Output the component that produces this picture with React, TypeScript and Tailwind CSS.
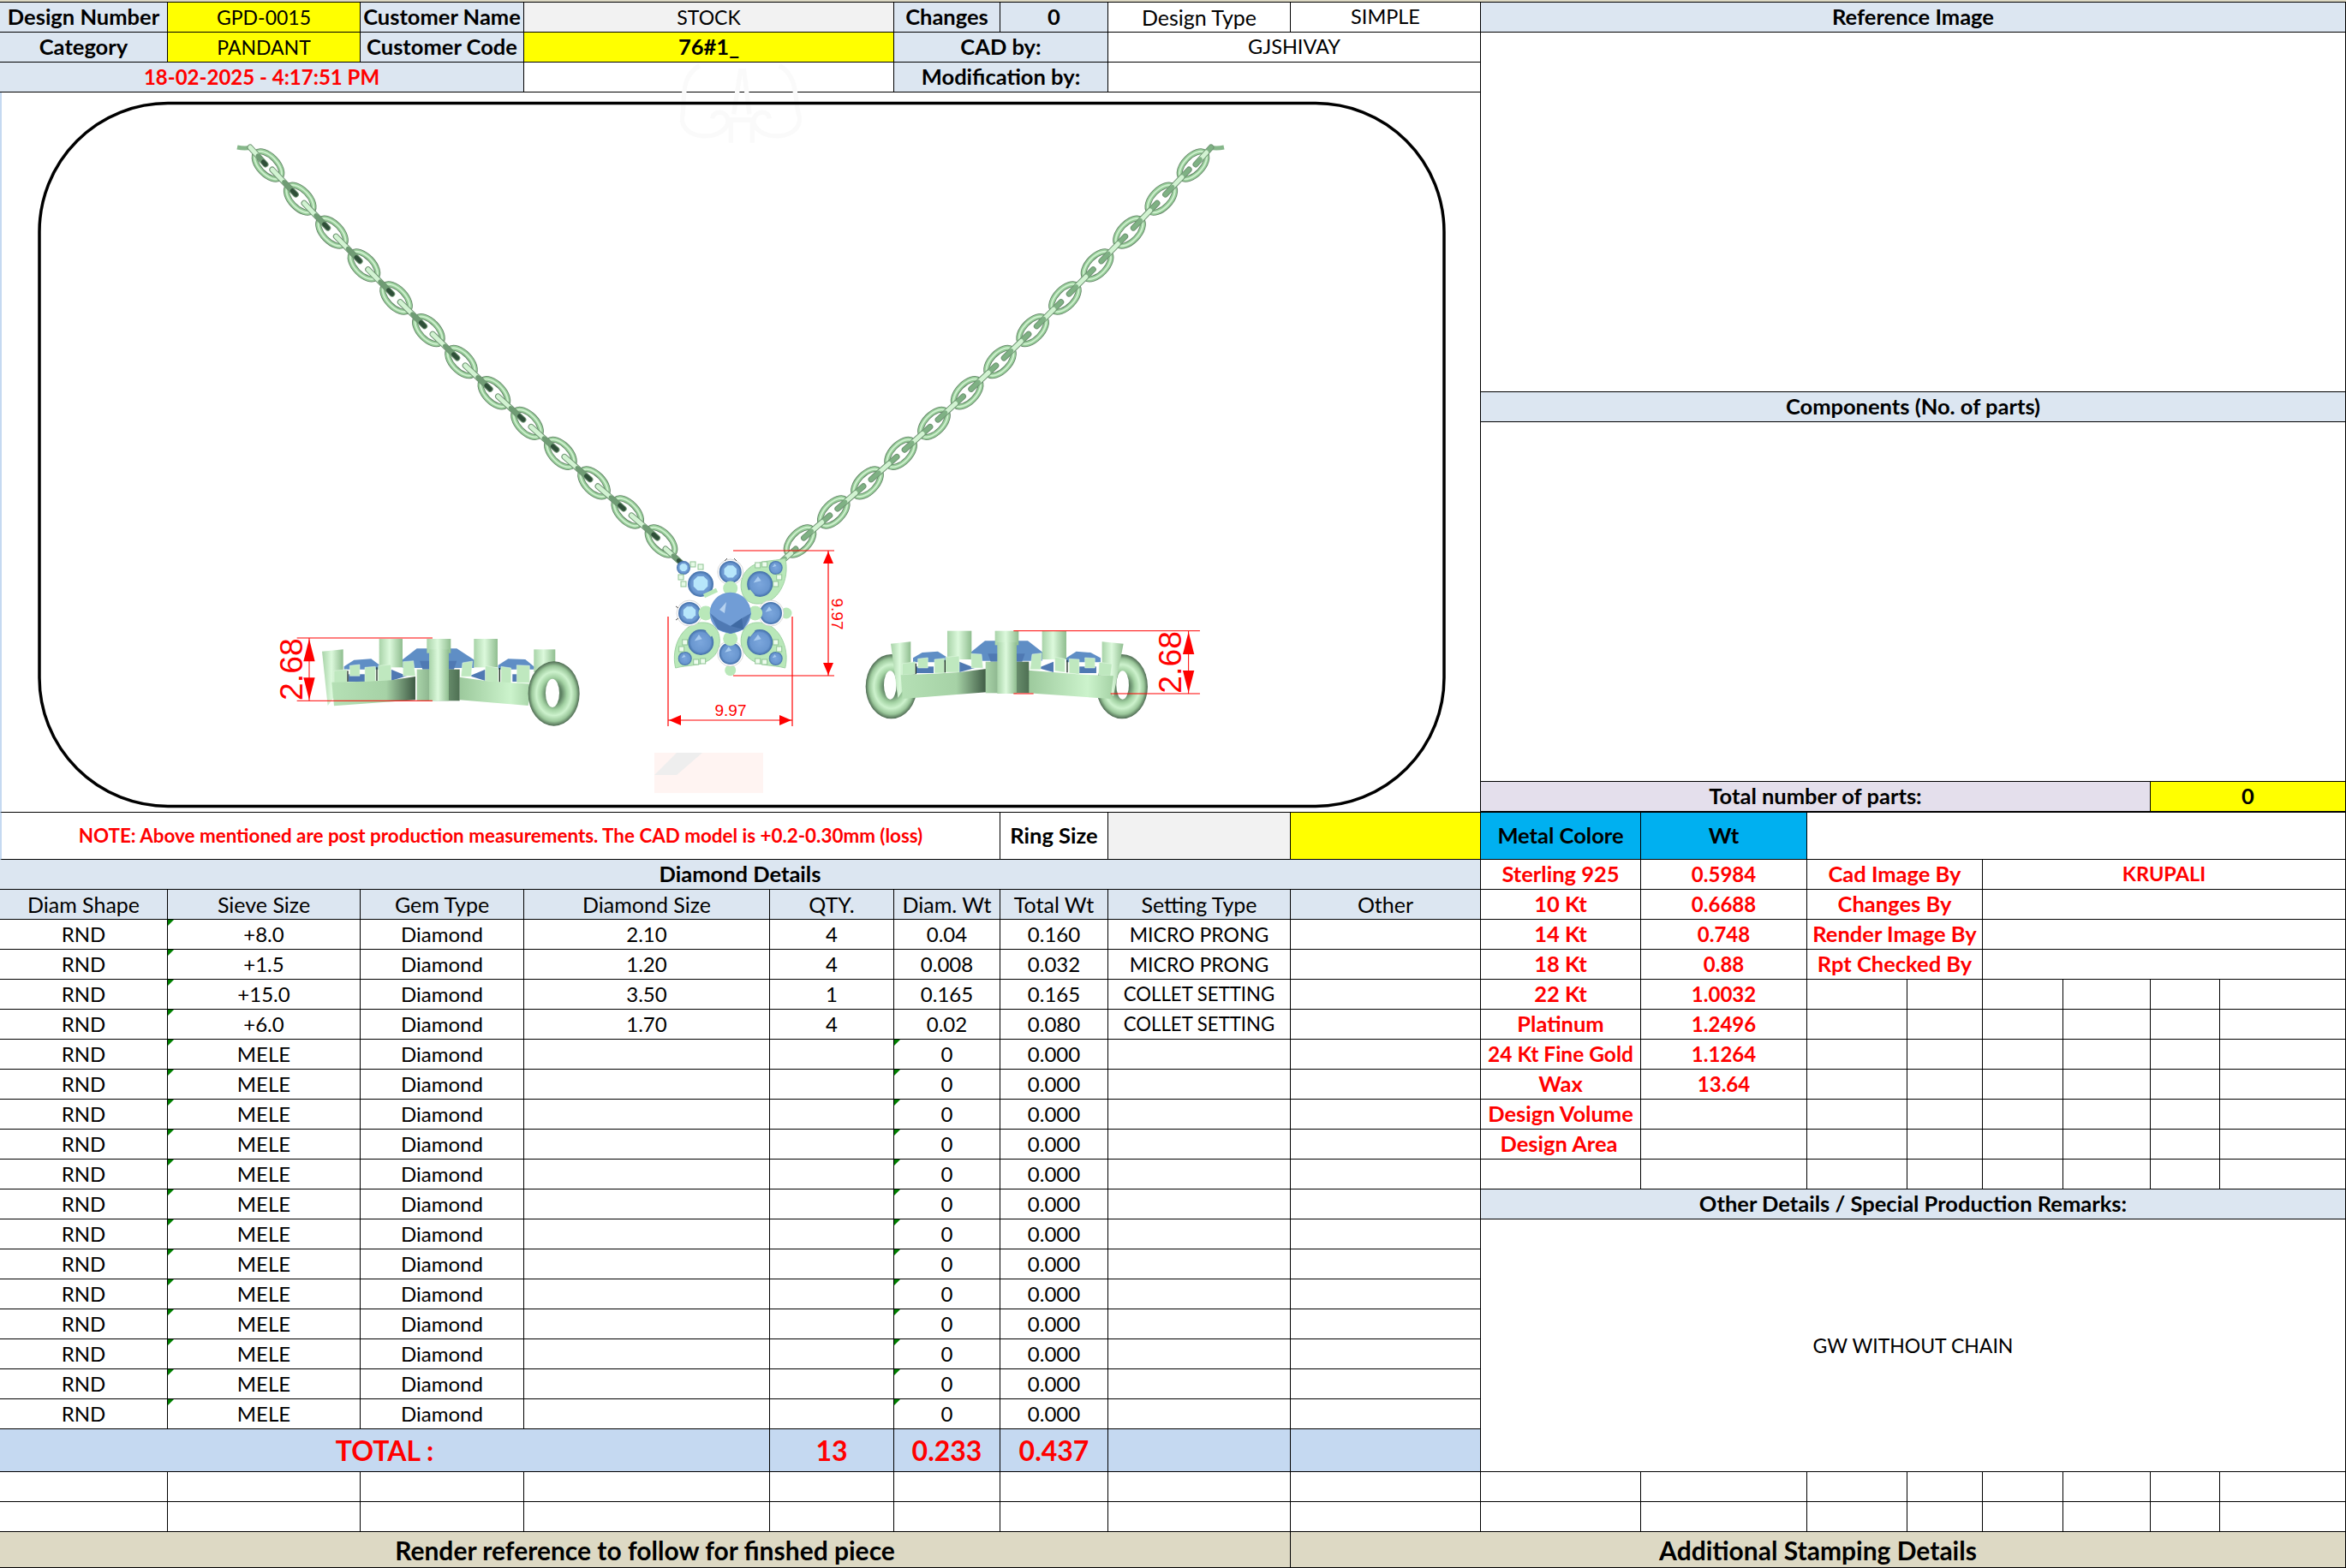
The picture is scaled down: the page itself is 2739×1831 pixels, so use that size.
import clsx from "clsx";
import type { ReactNode } from "react";

const data = [
  ["RND", "+8.0", "Diamond", "2.10", "4", "0.04", "0.160", "MICRO PRONG", ""],
  ["RND", "+1.5", "Diamond", "1.20", "4", "0.008", "0.032", "MICRO PRONG", ""],
  ["RND", "+15.0", "Diamond", "3.50", "1", "0.165", "0.165", "COLLET SETTING", ""],
  ["RND", "+6.0", "Diamond", "1.70", "4", "0.02", "0.080", "COLLET SETTING", ""],
  ...Array.from({ length: 13 }, () => ["RND", "MELE", "Diamond", "", "", "0", "0.000", "", ""]),
];

const metals = [
  ["Sterling 925", "0.5984"],
  ["10 Kt", "0.6688"],
  ["14 Kt", "0.748"],
  ["18 Kt", "0.88"],
  ["22 Kt", "1.0032"],
  ["Platinum", "1.2496"],
  ["24 Kt Fine Gold", "1.1264"],
  ["Wax", "13.64"],
  ["Design Volume", ""],
  ["Design Area", ""],
  ["", ""],
];

const signoff = ["Cad Image By", "Changes By", "Render Image By", "Rpt Checked By"];

const bold = "text-[25.5px] font-bold";
const label = "bg-[#dce6f1] text-[25.5px] font-bold";
const totalCell = "bg-[#c5d9f1] text-[32px] font-bold text-[#ff0000]";

function Cell({
  className,
  children,
  mark = false,
}: {
  className?: string;
  children?: ReactNode;
  mark?: boolean;
}) {
  return (
    <div
      className={clsx(
        "relative flex items-center justify-center whitespace-nowrap border-r border-b border-black",
        className
      )}
    >
      {mark && (
        <span className="absolute top-0 left-0 h-[7px] w-[7px] bg-[#008000] [clip-path:polygon(0_0,100%_0,0_100%)]" />
      )}
      {children}
    </div>
  );
}

// the row to the right of the diamond table for one index
function MetalRow({ index }: { index: number }) {
  const [name, wt] = metals[index];
  return (
    <>
      <Cell className={clsx("font-bold text-[#ff0000]", name === "24 Kt Fine Gold" ? "text-[24.5px]" : "text-[25.5px]", name === "Design Area" && "pr-1")}>
        {name}
      </Cell>
      <Cell className="font-bold text-[#ff0000]">{wt}</Cell>
      {index < 4 ? (
        <>
          <Cell className={clsx(bold, "col-span-2 text-[#ff0000]")}>{signoff[index]}</Cell>
          <Cell className="col-span-4 text-[23.5px] font-bold text-[#ff0000]">{index === 0 ? "KRUPALI" : ""}</Cell>
        </>
      ) : (
        [0, 1, 2, 3, 4, 5].map((i) => <Cell key={i} />)
      )}
    </>
  );
}

function DiamondRow({ row }: { row: string[] }) {
  return (
    <>
      {row.map((v, i) => (
        <Cell
          key={i}
          mark={i === 1 || (i === 5 && v === "0")}
          className={i === 7 ? (v.startsWith("MICRO") ? "text-[23px]" : "text-[22.2px]") : undefined}
        >
          {v}
        </Cell>
      ))}
    </>
  );
}

function Chain({ mirrored = false }: { mirrored?: boolean }) {
  const links = Array.from({ length: 13 }, (_, i) => {
    const t = i / 12;
    return {
      x: 313 + 459 * t - 4 * Math.sin(Math.PI * t),
      y: 193 + 439 * t + 10 * Math.sin(Math.PI * t),
    };
  });
  const rods = [
    { a: { x: 292, y: 172 }, b: { x: 310, y: 192 } },
    ...links.slice(0, -1).map((a, i) => {
      const b = links[i + 1];
      const mx = (a.x + b.x) / 2;
      const my = (a.y + b.y) / 2;
      const dx = b.x - a.x;
      const dy = b.y - a.y;
      const len = Math.hypot(dx, dy);
      return {
        a: { x: mx - (dx / len) * 20, y: my - (dy / len) * 20 },
        b: { x: mx + (dx / len) * 20, y: my + (dy / len) * 20 },
      };
    }),
    { a: { x: 777, y: 641 }, b: { x: 795, y: 657 } },
  ];
  const at = (r: (typeof rods)[number], t: number) => ({
    x: r.a.x + (r.b.x - r.a.x) * t,
    y: r.a.y + (r.b.y - r.a.y) * t,
  });
  const parts: [number, number, string][] = mirrored
    ? [
        [0, 0.3, "#7fb184"],
        [0.3, 0.7, "#d2f3d2"],
        [0.7, 1, "#7fb184"],
      ]
    : [
        [0, 0.5, "#d2f3d2"],
        [0.5, 0.85, "#6f9c74"],
        [0.85, 1, "#2f4f39"],
      ];
  return (
    <g transform={mirrored ? "translate(1706 0) scale(-1 1)" : undefined}>
      <path d="M277 172 Q286 174 294 172" fill="none" stroke="#86b78a" strokeWidth="5" />
      {links.map((l, i) => (
        <g key={i} transform={`rotate(46 ${l.x} ${l.y})`} fill="none">
          <ellipse cx={l.x} cy={l.y} rx="20" ry="10.5" stroke="#5f8063" strokeWidth="7" />
          <ellipse cx={l.x} cy={l.y} rx="20" ry="10.5" stroke="#96cb98" strokeWidth="5.4" />
          <ellipse cx={l.x} cy={l.y} rx="20" ry="10.5" stroke="#cdf0cd" strokeWidth="2" />
        </g>
      ))}
      {rods.map((r, i) => (
        <g key={i} fill="none" strokeLinecap="round">
          <line x1={r.a.x} y1={r.a.y} x2={r.b.x} y2={r.b.y} stroke="#6f9473" strokeWidth="7" />
          {parts.map(([s, e, c]) => {
            const p = at(r, s);
            const q = at(r, e);
            return <line key={s} x1={p.x} y1={p.y} x2={q.x} y2={q.y} stroke={c} strokeWidth="5" />;
          })}
        </g>
      ))}
    </g>
  );
}

function Stone({ x, y, r, pale = false, rim = false }: { x: number; y: number; r: number; pale?: boolean; rim?: boolean }) {
  return (
    <g>
      {rim && <circle cx={x} cy={y} r={r + 2} fill="#ffffff" stroke="#cfcfcf" strokeWidth="0.8" />}
      <circle cx={x} cy={y} r={r} fill="url(#gem)" />
      {pale ? (
        <polygon
          points={[0, 1, 2, 3, 4, 5, 6, 7]
            .map((k) => {
              const a = (k * Math.PI) / 4 + Math.PI / 8;
              return `${x + r * 0.6 * Math.cos(a)},${y - r * 0.05 + r * 0.6 * Math.sin(a)}`;
            })
            .join(" ")}
          fill="#b7e6fb"
        />
      ) : (
        <polygon
          points={`${x - r * 0.5},${y - r * 0.1} ${x - r * 0.15},${y - r * 0.6} ${x + r * 0.1},${y - r * 0.25}`}
          fill="#a9ccf0"
        />
      )}
    </g>
  );
}

function Petal({ sx, sy }: { sx: number; sy: number }) {
  // written for the top right corner; sx and sy flip it to the others
  const X = (v: number) => 852.7 + sx * v;
  const Y = (v: number) => 716 + sy * v;
  return (
    <g>
      <path
        d={`M${X(64)} ${Y(-64)} C${X(70)} ${Y(-40)} ${X(56)} ${Y(-9)} ${X(30)} ${Y(-11)} C${X(11)} ${Y(-12)} ${X(7)} ${Y(-38)} ${X(20)} ${Y(-51)} C${X(32)} ${Y(-63)} ${X(50)} ${Y(-60)} ${X(64)} ${Y(-64)} Z`}
        fill="#b9e8b9"
        stroke="#9fd2a3"
        strokeWidth="1"
      />
      <Stone x={X(34.5)} y={Y(-34)} r={15} />
      <Stone x={X(53)} y={Y(-53)} r={8} />
      {[
        [32, -56],
        [40, -57],
        [57, -42],
        [53, -34],
      ].map(([a, b]) => (
        <rect key={a} x={X(a) - 3} y={Y(b) - 3} width="6" height="6" fill="#eefcee" stroke="#8fc494" strokeWidth="1" />
      ))}
      <line x1={X(21)} y1={Y(-26)} x2={X(27)} y2={Y(-19)} stroke="#b9e8b9" strokeWidth="5" />
    </g>
  );
}

function Pendant() {
  return (
    <g>
      {[
        [918, 716, 6.5],
        [852.7, 782.7, 6.5],
      ].map(([x, y, r]) => (
        <circle key={`${x}-${y}`} cx={x} cy={y} r={r} fill="#b9e8b9" />
      ))}
      <Petal sx={1} sy={1} />
      <Petal sx={1} sy={-1} />
      <Petal sx={-1} sy={-1} />
      {/* top left corner has no petal behind the stones */}
      <Stone x={818} y={682} r={15} pale />
      <Stone x={798} y={663} r={8} pale />
      {[
        [809, 659],
        [818, 662],
        [795, 674],
        [798, 682],
      ].map(([x, y]) => (
        <rect key={x + y} x={x - 3} y={y - 3} width="6" height="6" fill="#e6f9e6" stroke="#8fc494" />
      ))}
      <path d="M822 696 L837 689" stroke="#b9e8b9" strokeWidth="5" />
      <Stone x={852.7} y={668} r={13} pale rim />
      <Stone x={805} y={716} r={13} pale rim />
      <Stone x={900} y={716} r={13} rim />
      <Stone x={852.7} y={763} r={13} rim />
      <circle cx={852.7} cy={687} r={8.5} fill="#b9e8b9" />
      <circle cx={824} cy={716} r={8.5} fill="#b9e8b9" />
      <circle cx={881.7} cy={716} r={8.5} fill="#b9e8b9" />
      <circle cx={852.7} cy={745.7} r={8.5} fill="#b9e8b9" />
      <circle cx={852.7} cy={715.7} r={24} fill="#6f9bd4" />
      <polygon points="829,716 838,697 853,692 868,697 877,716 868,735 853,740 838,735" fill="#719dd6" />
      <polygon points="840,712 848,703 846,716" fill="#b7d2ef" />
      <polygon points="829,716 838,735 853,740 868,735 877,716 866,722 853,731 839,724" fill="#4f79b3" />
      <polygon points="853,731 866,722 868,735" fill="#3f6aa3" />
      {/* little wires beside the top and left stones */}
      <path d="M846 655 L849 652 M860 655 L857 652 M792 710 L789 708 M792 722 L789 724" stroke="#555" strokeWidth="1" />
    </g>
  );
}

function Tooth({ p }: { p: string }) {
  return <polygon points={p} fill="#bfe8bf" stroke="#e7fbe7" strokeWidth="1.5" />;
}

function LeftSide() {
  return (
    <g transform="translate(300 700) scale(0.3333)">
      <polygon points="305,235 340,212 400,208 432,232 430,245 305,245" fill="#5f8ec5" />
      <polygon points="508,212 560,172 700,172 762,212 760,240 510,240" fill="#5f8ec5" />
      <polygon points="845,230 880,208 940,210 972,236 970,245 845,245" fill="#5f8ec5" />
      <polygon points="228,182 302,175 302,300 248,372" fill="url(#post)" />
      <rect x="428" y="138" width="82" height="100" fill="url(#post)" />
      <rect x="595" y="138" width="84" height="50" fill="url(#post)" />
      <rect x="760" y="138" width="83" height="100" fill="url(#post)" />
      <rect x="970" y="175" width="75" height="80" fill="url(#post)" />
      <polygon points="320,262 380,262 380,288 320,288" fill="#4f79b3" />
      <polygon points="470,245 525,268 470,285" fill="#4f79b3" />
      <polygon points="800,245 745,268 800,285" fill="#4f79b3" />
      <polygon points="895,262 950,262 950,288 895,288" fill="#4f79b3" />
      <polygon points="570,215 700,215 690,245 580,245" fill="#4f79b3" />
      <Tooth p="270,250 315,245 315,292 270,292" />
      <Tooth p="325,232 360,228 360,268 325,268" />
      <Tooth p="378,238 415,235 415,288 378,288" />
      <Tooth p="425,232 470,228 470,285 425,285" />
      <Tooth p="512,218 548,215 555,268 512,268" />
      <Tooth p="720,222 755,216 750,270 715,270" />
      <Tooth p="800,232 845,240 845,292 800,285" />
      <Tooth p="855,235 890,240 890,295 855,292" />
      <Tooth p="910,230 955,232 955,292 910,292" />
      <g stroke="#1f2f24" strokeWidth="4">
        <line x1="318" y1="250" x2="318" y2="288" />
        <line x1="420" y1="238" x2="420" y2="285" />
        <line x1="850" y1="240" x2="850" y2="290" />
      </g>
      <polygon points="262,290 380,287 470,283 555,270 555,352 270,373" fill="url(#bandDark)" />
      <polygon points="710,272 800,285 890,292 965,296 950,372 710,352" fill="url(#bandLight)" />
      <rect x="560" y="245" width="150" height="110" fill="url(#hub)" />
      <rect x="603" y="175" width="69" height="180" fill="url(#post)" />
      <ellipse cx="1040" cy="330" rx="90" ry="113" fill="url(#torus)" />
      <ellipse cx="1035" cy="328" rx="24" ry="50" fill="#ffffff" />
      <g stroke="#ff0000" strokeWidth="3" fill="none">
        <line x1="140" y1="135" x2="615" y2="135" />
        <line x1="140" y1="355" x2="615" y2="355" />
        <line x1="183" y1="135" x2="183" y2="355" />
      </g>
      <polygon points="183,138 163,217 203,217" fill="#ff0000" />
      <polygon points="183,352 163,274 203,274" fill="#ff0000" />
      <text
        transform="translate(158 245) rotate(-90)"
        textAnchor="middle"
        className="[font-family:'Liberation_Sans',sans-serif]"
        fontSize="112"
        fill="#ff0000"
      >
        2.68
      </text>
    </g>
  );
}

function RightSide() {
  return (
    <g transform="translate(980 700) scale(0.3333)">
      <ellipse cx="182" cy="305" rx="90" ry="113" fill="url(#torus)" />
      <ellipse cx="178" cy="300" rx="22" ry="50" fill="#ffffff" />
      <ellipse cx="990" cy="305" rx="90" ry="113" fill="url(#torus)" />
      <ellipse cx="992" cy="300" rx="22" ry="50" fill="#ffffff" />
      <polygon points="258,205 290,186 345,182 380,205 378,220 258,220" fill="#5f8ec5" />
      <polygon points="460,185 510,145 660,145 712,185 710,215 462,215" fill="#5f8ec5" />
      <polygon points="795,205 830,182 880,186 915,205 915,220 795,220" fill="#5f8ec5" />
      <polygon points="180,155 250,148 250,280 205,345" fill="url(#post)" />
      <polygon points="920,148 995,155 960,340 920,280" fill="url(#post)" />
      <rect x="378" y="110" width="85" height="100" fill="url(#post)" />
      <rect x="545" y="110" width="83" height="50" fill="url(#post)" />
      <rect x="710" y="110" width="85" height="100" fill="url(#post)" />
      <polygon points="270,235 330,235 330,258 270,258" fill="#4f79b3" />
      <polygon points="420,218 475,240 420,255" fill="#4f79b3" />
      <polygon points="750,218 695,240 750,255" fill="#4f79b3" />
      <polygon points="840,235 900,235 900,258 840,258" fill="#4f79b3" />
      <polygon points="520,190 650,190 640,218 530,218" fill="#4f79b3" />
      <Tooth p="220,225 265,218 265,262 220,265" />
      <Tooth p="275,208 310,204 310,240 275,240" />
      <Tooth p="333,210 368,206 368,258 333,258" />
      <Tooth p="372,202 420,198 420,255 372,255" />
      <Tooth p="462,190 498,192 503,240 462,240" />
      <Tooth p="675,192 708,188 705,245 668,245" />
      <Tooth p="755,202 790,208 790,255 755,250" />
      <Tooth p="805,208 840,210 840,262 805,258" />
      <Tooth p="860,204 895,206 895,240 860,240" />
      <Tooth p="910,220 955,226 950,268 908,265" />
      <g stroke="#1f2f24" strokeWidth="4">
        <line x1="268" y1="224" x2="268" y2="262" />
        <line x1="370" y1="212" x2="370" y2="256" />
        <line x1="798" y1="212" x2="798" y2="256" />
      </g>
      <polygon points="215,265 330,260 420,255 515,243 515,325 222,348" fill="url(#bandDark)" />
      <polygon points="660,248 750,255 850,263 960,268 950,348 660,328" fill="url(#bandLight)" />
      <rect x="512" y="218" width="152" height="110" fill="url(#hub)" />
      <rect x="553" y="150" width="68" height="180" fill="url(#post)" />
      <g stroke="#ff0000" strokeWidth="3" fill="none">
        <line x1="610" y1="110" x2="1263" y2="110" />
        <line x1="610" y1="330" x2="680" y2="330" />
        <line x1="950" y1="330" x2="1263" y2="330" />
        <line x1="1223" y1="110" x2="1223" y2="330" />
      </g>
      <polygon points="1223,113 1203,192 1243,192" fill="#ff0000" />
      <polygon points="1223,327 1203,249 1243,249" fill="#ff0000" />
      <text
        transform="translate(1198 220) rotate(-90)"
        textAnchor="middle"
        className="[font-family:'Liberation_Sans',sans-serif]"
        fontSize="112"
        fill="#ff0000"
      >
        2.68
      </text>
    </g>
  );
}

function Drawing() {
  return (
    <svg viewBox="2 108 1726 840" className="block h-full w-full overflow-visible">
      <defs>
        <radialGradient id="gem">
          <stop offset="0%" stopColor="#7ba6dc" />
          <stop offset="75%" stopColor="#6a97d0" />
          <stop offset="100%" stopColor="#3f6ca6" />
        </radialGradient>
        <linearGradient id="post">
          <stop offset="0%" stopColor="#a8d3a8" />
          <stop offset="45%" stopColor="#dcf9dc" />
          <stop offset="100%" stopColor="#8fbd8f" />
        </linearGradient>
        <linearGradient id="bandDark">
          <stop offset="0%" stopColor="#b5e0b5" />
          <stop offset="65%" stopColor="#a6d2a6" />
          <stop offset="100%" stopColor="#3e5a44" />
        </linearGradient>
        <linearGradient id="bandLight">
          <stop offset="0%" stopColor="#9cc99c" />
          <stop offset="70%" stopColor="#ccf3cc" />
          <stop offset="100%" stopColor="#a5d2a5" />
        </linearGradient>
        <linearGradient id="hub">
          <stop offset="0%" stopColor="#a9d4a9" />
          <stop offset="100%" stopColor="#4e7053" />
        </linearGradient>
        <radialGradient id="torus">
          <stop offset="30%" stopColor="#5f8364" />
          <stop offset="50%" stopColor="#a3d2a3" />
          <stop offset="68%" stopColor="#cdf2cd" />
          <stop offset="86%" stopColor="#9ac79a" />
          <stop offset="100%" stopColor="#4e6a52" />
        </radialGradient>
      </defs>

      {/* faint logo left behind the drawing */}
      <g transform="translate(760 50) scale(0.3333)" fill="none" stroke="#fafafa" strokeWidth="16">
        <path d="M170 80 C100 120 120 200 110 260 C100 340 250 350 270 280 C275 240 220 230 215 265" />
        <path d="M450 80 C520 120 500 200 520 260 C530 340 380 350 360 280 C355 240 410 230 415 265" />
        <path d="M280 350 L280 270 L355 270 L355 350" />
        <path d="M315 90 L290 250 M325 90 L345 250" />
      </g>
      <polygon points="764,879 891,879 891,926 764,926" fill="#fff4f2" />
      <polygon points="764,905 790,879 820,879 790,905" fill="#eeeeee" />

      <rect x="46" y="120.5" width="1640" height="821" rx="150" fill="none" stroke="#000000" strokeWidth="3.5" />

      <Chain />
      <Chain mirrored />
      <Pendant />
      <LeftSide />
      <RightSide />

      <g stroke="#ff0000" strokeWidth="1.2" fill="none">
        <line x1="856" y1="643" x2="974" y2="643" />
        <line x1="856" y1="789" x2="974" y2="789" />
        <line x1="967" y1="643" x2="967" y2="789" />
        <line x1="780" y1="720" x2="780" y2="848" />
        <line x1="925" y1="720" x2="925" y2="848" />
        <line x1="780" y1="841" x2="925" y2="841" />
      </g>
      <polygon points="967,644 961,658 973,658" fill="#ff0000" />
      <polygon points="967,788 961,774 973,774" fill="#ff0000" />
      <polygon points="781,841 795,835 795,847" fill="#ff0000" />
      <polygon points="924,841 910,835 910,847" fill="#ff0000" />
      <g fill="#ff0000" fontSize="19" className="[font-family:'Liberation_Sans',sans-serif]">
        <text x="853" y="836" textAnchor="middle">
          9.97
        </text>
        <text transform="translate(971 717) rotate(90)" textAnchor="middle">
          9.97
        </text>
      </g>
    </svg>
  );
}

export default function App() {
  return (
    <div className="h-[1831px] w-[2739px] bg-white text-[24px] leading-none text-black [font-family:Lato,sans-serif]">
      <div className="h-[2px] bg-[#ddd9c4]" />
      <div className="grid grid-cols-[196px_225px_191px_287px_145px_124px_126px_213px_222px_187px_194px_117px_88px_94px_102px_81px_147px] grid-rows-[35px_35px_35px_350px_35px_420px_36px_55px_repeat(19,35px)_50px_35px_35px_42px] border-t border-black">
        {/* rows 1 to 3, the job header */}
        <Cell className={label}>Design Number</Cell>
        <Cell className="bg-[#ffff00] text-[23px]">GPD-0015</Cell>
        <Cell className={label}>Customer Name</Cell>
        <Cell className="col-span-2 bg-[#f2f2f2] text-[23px]">STOCK</Cell>
        <Cell className={label}>Changes</Cell>
        <Cell className={label}>0</Cell>
        <Cell className="text-[25px]">Design Type</Cell>
        <Cell className="text-[23.5px]">SIMPLE</Cell>
        <Cell className={clsx(label, "col-span-8")}>Reference Image</Cell>

        <Cell className={label}>Category</Cell>
        <Cell className="bg-[#ffff00] text-[23px]">PANDANT</Cell>
        <Cell className={label}>Customer Code</Cell>
        <Cell className={clsx(bold, "col-span-2 bg-[#ffff00]")}>76#1_</Cell>
        <Cell className={clsx(label, "col-span-2")}>CAD by:</Cell>
        <Cell className="col-span-2 text-[23.5px]">GJSHIVAY</Cell>
        <Cell className="col-span-8 row-span-3" />

        <Cell className="col-span-3 bg-[#dce6f1] font-bold text-[#ff0000]">18-02-2025 - 4:17:51 PM</Cell>
        <Cell className="col-span-2" />
        <Cell className={clsx(label, "col-span-2")}>Modification by:</Cell>
        <Cell className="col-span-2" />

        {/* CAD views and the right hand panels beside them */}
        <Cell className="col-span-9 row-span-4 border-l-2 border-l-[#c5d9f1]">
          <Drawing />
        </Cell>
        <Cell className={clsx(label, "col-span-8")}>Components (No. of parts)</Cell>
        <Cell className="col-span-8" />
        <Cell className={clsx(bold, "col-span-6 border-b-2 bg-[#e4dfec]")}>Total number of parts:</Cell>
        <Cell className={clsx(bold, "col-span-2 border-b-2 bg-[#ffff00]")}>0</Cell>

        <Cell className="col-span-6 border-l-2 border-l-[#c5d9f1] text-[22.4px] font-bold text-[#ff0000]">
          NOTE: Above mentioned are post production measurements. The CAD model is +0.2-0.30mm (loss)
        </Cell>
        <Cell className={bold}>Ring Size</Cell>
        <Cell className="bg-[#f2f2f2]" />
        <Cell className="bg-[#ffff00]" />
        <Cell className={clsx(bold, "bg-[#00b0f0]")}>Metal Colore</Cell>
        <Cell className={clsx(bold, "bg-[#00b0f0]")}>Wt</Cell>
        <Cell className="col-span-6" />

        {/* diamond table, metals table runs down next to it */}
        <Cell className={clsx(label, "col-span-9")}>Diamond Details</Cell>
        <MetalRow index={0} />

        {["Diam Shape", "Sieve Size", "Gem Type", "Diamond Size", "QTY.", "Diam. Wt", "Total Wt", "Setting Type", "Other"].map(
          (h) => (
            <Cell key={h} className="bg-[#dce6f1] text-[25px]">
              {h}
            </Cell>
          )
        )}
        <MetalRow index={1} />

        {data.slice(0, 9).flatMap((row, i) => [
          <DiamondRow key={`d${i}`} row={row} />,
          <MetalRow key={`m${i}`} index={i + 2} />,
        ])}

        <DiamondRow row={data[9]} />
        <Cell className={clsx(label, "col-span-8")}>Other Details / Special Production Remarks:</Cell>

        <DiamondRow row={data[10]} />
        <Cell className="col-span-8 row-span-8 text-[23px]">GW WITHOUT CHAIN</Cell>
        {data.slice(11).map((row, i) => (
          <DiamondRow key={i} row={row} />
        ))}

        <Cell className={clsx(totalCell, "col-span-4")}>TOTAL :</Cell>
        <Cell className={totalCell}>13</Cell>
        <Cell className={totalCell}>0.233</Cell>
        <Cell className={totalCell}>0.437</Cell>
        <Cell className={totalCell} />
        <Cell className={totalCell} />

        {Array.from({ length: 34 }, (_, i) => (
          <Cell key={i} />
        ))}

        <Cell className="col-span-8 bg-[#ddd9c4] text-[30px] font-bold">
          Render reference to follow for finshed piece
        </Cell>
        <Cell className="col-span-9 bg-[#ddd9c4] text-[30px] font-bold">Additional Stamping Details</Cell>
      </div>
    </div>
  );
}
